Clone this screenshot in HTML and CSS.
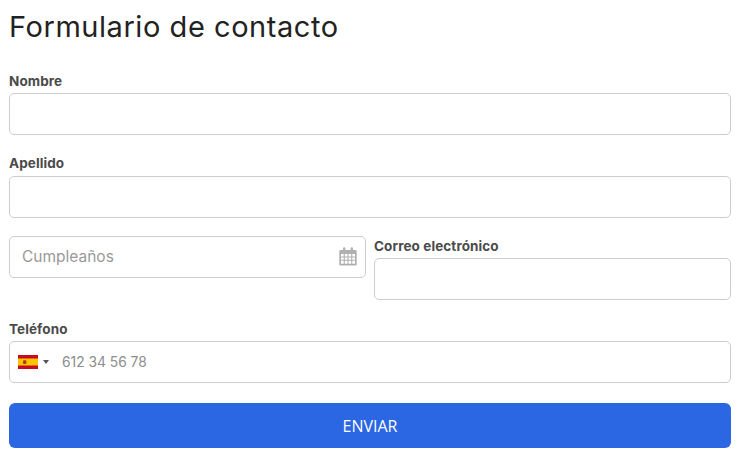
FILE: index.html
```html
<!DOCTYPE html>
<html lang="es">
<head>
  <meta charset="UTF-8">
  <title>Formulario de contacto</title>
  <link rel="stylesheet" href="styles.css">
</head>
<body>
  <form class="contact-form">
    <h1>Formulario de contacto</h1>

    <div class="form-group">
      <label for="nombre">Nombre</label>
      <input type="text" id="nombre">
    </div>

    <div class="form-group">
      <label for="apellido">Apellido</label>
      <input type="text" id="apellido">
    </div>

    <div class="form-row">
      <div class="date-field">
        <input type="text" id="cumple" placeholder="Cumpleaños">
        <svg class="date-icon" width="18" height="19" viewBox="0 0 18 19">
          <path fill="#b0b0b0" fill-rule="evenodd" d="M1.5 3H4V1.5a1.2 1.2 0 0 1 2.4 0V3h5.2V1.5a1.2 1.2 0 0 1 2.4 0V3h2.5A1.2 1.2 0 0 1 17.7 4.2v13.1a1.2 1.2 0 0 1-1.2 1.2H1.5A1.2 1.2 0 0 1 .3 17.3V4.2A1.2 1.2 0 0 1 1.5 3zM2 7v2.4h2.7V7zm3.8 0v2.4h2.7V7zm3.7 0v2.4h2.7V7zm3.8 0v2.4H16V7zM2 10.4v2.4h2.7v-2.4zm3.8 0v2.4h2.7v-2.4zm3.7 0v2.4h2.7v-2.4zm3.8 0v2.4H16v-2.4zM2 13.8v2.9h2.7v-2.9zm3.8 0v2.9h2.7v-2.9zm3.7 0v2.9h2.7v-2.9zm3.8 0v2.9H16v-2.9z"/>
        </svg>
      </div>
      <div class="form-group">
        <label for="correo">Correo electrónico</label>
        <input type="email" id="correo">
      </div>
    </div>

    <div class="form-group">
      <label for="telefono">Teléfono</label>
      <div class="phone-field">
        <div class="country-select">
          <svg class="flag" width="20" height="14" viewBox="0 0 20 14">
            <rect width="20" height="14" fill="#c60b1e"/>
            <rect y="3.5" width="20" height="7" fill="#ffc400"/>
            <rect x="5" y="5.3" width="3.4" height="3.6" rx="1" fill="#ad3a1c"/>
          </svg>
          <span class="caret"></span>
        </div>
        <input type="tel" id="telefono" placeholder="612 34 56 78">
      </div>
    </div>

    <button type="button" class="send-button">ENVIAR</button>
  </form>
</body>
</html>
```

FILE: styles.css
```css
body {
  margin: 0;
  padding: 0 12px 0 9px;
  background-color: #fff;
  font-family: "Inter", "Liberation Sans", sans-serif;
  color: #444;
}
h1 {
  margin: 0;
  padding-top: 9px;
  height: 70.8px;
  box-sizing: border-box;
  font-size: 29px;
  line-height: 36px;
  font-weight: 400;
  letter-spacing: 0.55px;
  color: #222;
}
.form-group {
  flex: 1;
  margin-bottom: 18.4px;
}
.form-group label {
  display: block;
  height: 22.2px;
  font-size: 13.5px;
  line-height: 20px;
  font-weight: 700;
  letter-spacing: 0.1px;
  color: #4a4a4a;
}
input {
  display: block;
  width: 100%;
  height: 42px;
  box-sizing: border-box;
  padding: 0 12px;
  background-color: #fff;
  border: 1px solid #ccc;
  border-radius: 5px;
  font-family: inherit;
  font-size: 14px;
  color: #444;
}
input::placeholder {
  color: #8c8c8c;
  opacity: 1;
}
.form-row {
  display: flex;
  gap: 8px;
}
.date-field {
  flex: 1;
  position: relative;
}
.date-field input {
  font-size: 15.5px;
}
.date-field input::placeholder {
  color: #999;
}
.date-icon {
  position: absolute;
  top: 11px;
  right: 9px;
}
.phone-field {
  display: flex;
  align-items: center;
  height: 42px;
  box-sizing: border-box;
  border: 1px solid #ccc;
  border-radius: 5px;
}
.phone-field input {
  flex: 1;
  height: 40px;
  padding: 0 0 0 13px;
  border: none;
  background: transparent;
  font-size: 13.8px;
}
.country-select {
  display: flex;
  align-items: center;
  gap: 5px;
  padding-left: 8px;
}
.flag {
  display: block;
}
.caret {
  width: 0;
  height: 0;
  border-left: 3px solid transparent;
  border-right: 3px solid transparent;
  border-top: 4px solid #555;
}
.send-button {
  display: block;
  width: 100%;
  height: 45px;
  margin-top: 20.4px;
  background-color: #2b66e3;
  color: #fff;
  border: none;
  border-radius: 6px;
  font-family: "Open Sans", sans-serif;
  font-size: 16px;
}
```
